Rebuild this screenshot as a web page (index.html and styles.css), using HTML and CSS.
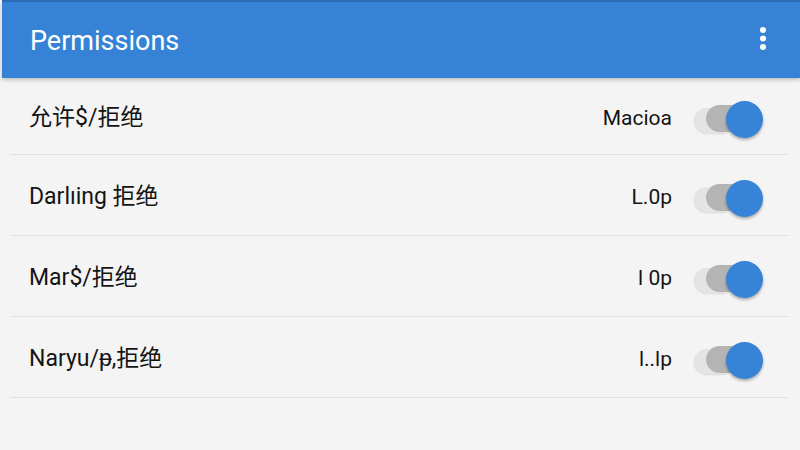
FILE: index.html
```html
<!DOCTYPE html>
<html>
<head>
<meta charset="utf-8">
<link rel="stylesheet" href="styles.css">
</head>
<body>
<header class="appbar">
  <h1 class="title">Permissions</h1>
  <svg class="more" width="8" height="26" viewBox="0 0 8 26"><circle cx="4" cy="4" r="3" fill="#fff"/><circle cx="4" cy="12.5" r="3" fill="#fff"/><circle cx="4" cy="21" r="3" fill="#fff"/></svg>
</header>
<main class="list">
  <div class="row first">
    <span class="name">允许$/拒绝</span>
    <span class="value">Macioa</span>
    <span class="toggle"><i class="pill-light"></i><i class="pill-dark"></i><i class="knob"></i></span>
  </div>
  <div class="row">
    <span class="name">Darlıing 拒绝</span>
    <span class="value">L.0p</span>
    <span class="toggle"><i class="pill-light"></i><i class="pill-dark"></i><i class="knob"></i></span>
  </div>
  <div class="row">
    <span class="name">Mar$/拒绝</span>
    <span class="value">l 0p</span>
    <span class="toggle"><i class="pill-light"></i><i class="pill-dark"></i><i class="knob"></i></span>
  </div>
  <div class="row">
    <span class="name">Naryu/ᵽ,拒绝</span>
    <span class="value">l..lp</span>
    <span class="toggle"><i class="pill-light"></i><i class="pill-dark"></i><i class="knob"></i></span>
  </div>
</main>
</body>
</html>
```
FILE: styles.css
```css
html, body {
  margin: 0;
  padding: 0;
  background: #f4f4f4;
  width: 800px;
  height: 450px;
  overflow: hidden;
  font-family: Roboto, "Noto Sans CJK SC", sans-serif;
}
.appbar {
  height: 76px;
  margin-left: 2px;
  border-top: 2px solid #2c6bb3;
  background: #3682d6;
  box-shadow: 0 2px 4px rgba(0,0,0,0.22);
  display: flex;
  align-items: center;
  padding: 0 33px 0 28px;
  position: relative;
}
.title {
  margin: 0;
  flex: 1;
  color: #fff;
  font-weight: 400;
  font-size: 27px;
  margin-top: 1px;
}
.more {
  display: block;
  margin-top: -2px;
}
.list {
  margin: 0 12px 0 10px;
}
.row {
  height: 80px;
  border-bottom: 1px solid #e1e1e1;
  display: flex;
  align-items: center;
  padding: 0 24px 0 19px;
}
.row.first {
  height: 76px;
}
.name {
  flex: 1;
  font-size: 23px;
  color: #141414;
  margin-top: -2px;
}
.value {
  font-size: 21px;
  color: #141414;
  margin-right: 22px;
  margin-top: 4px;
}
.toggle {
  position: relative;
  width: 70px;
  height: 37px;
  margin-top: 7px;
}
.toggle i {
  position: absolute;
  display: block;
}
.pill-light {
  left: 0;
  top: 7px;
  width: 40px;
  height: 25px;
  border-radius: 13px;
  background: #e4e4e4;
  box-shadow: 0 1px 2px rgba(0,0,0,0.12);
}
.pill-dark {
  left: 12px;
  top: 4px;
  width: 42px;
  height: 27px;
  border-radius: 14px;
  background: #b4b4b4;
}
.knob {
  left: 32px;
  top: 0;
  width: 37px;
  height: 37px;
  border-radius: 50%;
  background: #3783d8;
  box-shadow: 0 2px 3px rgba(0,0,0,0.3);
}
```
